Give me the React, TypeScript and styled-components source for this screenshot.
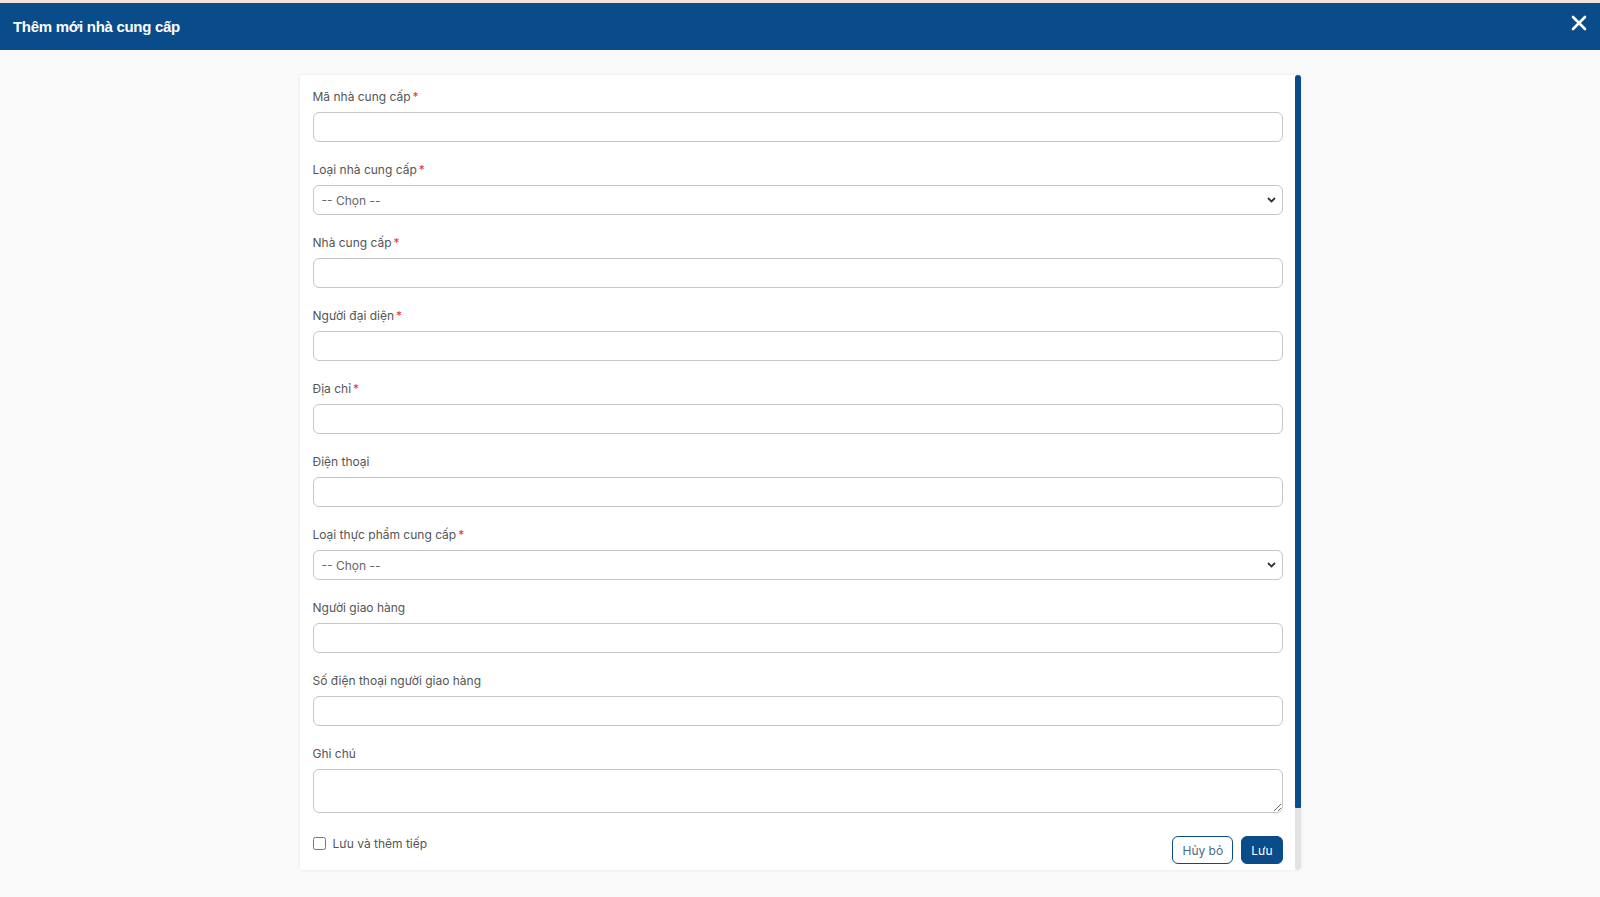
import React from "react";
import styled, { createGlobalStyle } from "styled-components";

const GlobalStyle = createGlobalStyle`
  html, body {
    margin: 0;
    padding: 0;
    background: #fafafa;
    font-family: "Inter", "Noto Sans", sans-serif;
  }
  * { box-sizing: border-box; }
`;

const Page = styled.div`
  height: 897px;
  display: flex;
  flex-direction: column;
  border-top: 3px solid #f3e3df;
  overflow: hidden;
`;

const Header = styled.div`
  height: 47px;
  flex-shrink: 0;
  background: #0a4c89;
  display: flex;
  align-items: center;
  justify-content: space-between;
  padding: 0 13px;
`;

const Title = styled.h1`
  margin: 0;
  color: #fff;
  font-family: "Liberation Sans", Arial, sans-serif;
  font-size: 15px;
  font-weight: 700;
  letter-spacing: -0.3px;
`;

const CloseButton = styled.button`
  border: 0;
  background: transparent;
  padding: 0;
  width: 16px;
  height: 16px;
  margin-top: -7px;
  cursor: pointer;
  display: flex;
`;

const Body = styled.div`
  flex: 1;
  display: flex;
  justify-content: center;
  padding-top: 25px;
`;

const Card = styled.div`
  width: 1001px;
  height: 795px;
  background: #fff;
  box-shadow: 0 0 4px rgba(0, 0, 0, 0.08);
  display: flex;
  overflow: hidden;
`;

const Content = styled.div`
  flex: 1;
  padding: 12px 12px 70px 13px;
`;

const ScrollTrack = styled.div`
  width: 6px;
  flex-shrink: 0;
  background: #e2e2e2;
  border-radius: 3px;
  display: flex;
  flex-direction: column;
`;

const ScrollThumb = styled.div`
  height: 733px;
  background: #0a4c89;
  border-radius: 3px 3px 1px 1px;
`;

const Field = styled.div`
  display: flex;
  flex-direction: column;
  margin-bottom: 18px;
`;

const Label = styled.label`
  font-size: 12px;
  line-height: 20px;
  color: #555;
  margin-bottom: 5px;
`;

const Star = styled.span`
  color: #e8323c;
  margin-left: 2px;
`;

const Input = styled.input`
  height: 30px;
  width: 100%;
  border: 1px solid #c6c6c6;
  border-radius: 6px;
  font-family: inherit;
  font-size: 12px;
  padding: 0 8px;
  outline: none;
`;

const SelectWrap = styled.div`
  position: relative;
  height: 30px;
`;

const Select = styled.select`
  appearance: none;
  height: 30px;
  width: 100%;
  border: 1px solid #c6c6c6;
  border-radius: 6px;
  background: #fff;
  color: #666;
  font-family: inherit;
  font-size: 12px;
  padding: 0 8px;
  outline: none;
`;

const Chevron = styled.svg`
  position: absolute;
  right: 7px;
  top: 12px;
  pointer-events: none;
`;

const TextArea = styled.textarea`
  display: block;
  height: 44px;
  width: 100%;
  border: 1px solid #c6c6c6;
  border-radius: 6px;
  font-family: inherit;
  font-size: 12px;
  padding: 6px 8px;
  outline: none;
`;

const Footer = styled.div`
  display: flex;
  justify-content: space-between;
  align-items: flex-start;
  margin-top: 5px;
`;

const CheckRow = styled.label`
  display: flex;
  align-items: center;
  gap: 7px;
  font-size: 12px;
  color: #555;
  margin-top: 5px;

  input {
    width: 13px;
    height: 13px;
    margin: 0;
  }
`;

const Buttons = styled.div`
  display: flex;
  gap: 8px;
  margin-top: 5px;
`;

const Button = styled.button<{ $primary?: boolean }>`
  height: 28px;
  padding: 0 9px;
  border-radius: 6px;
  font-family: inherit;
  font-size: 12px;
  cursor: pointer;
  border: 1px solid #0a4c89;
  background: ${(p) => (p.$primary ? "#0a4c89" : "#fff")};
  color: ${(p) => (p.$primary ? "#fff" : "#4a6a8a")};
`;

type FieldDef = { label: string; required?: boolean; kind?: "select" | "textarea" };

const fields: FieldDef[] = [
  { label: "Mã nhà cung cấp", required: true },
  { label: "Loại nhà cung cấp", required: true, kind: "select" },
  { label: "Nhà cung cấp", required: true },
  { label: "Người đại diện", required: true },
  { label: "Địa chỉ", required: true },
  { label: "Điện thoại" },
  { label: "Loại thực phẩm cung cấp", required: true, kind: "select" },
  { label: "Người giao hàng" },
  { label: "Số điện thoại người giao hàng" },
  { label: "Ghi chú", kind: "textarea" },
];

export default function App() {
  return (
    <>
      <GlobalStyle />
      <Page>
        <Header>
          <Title>Thêm mới nhà cung cấp</Title>
          <CloseButton aria-label="close">
            <svg width="16" height="16" viewBox="0 0 16 16">
              <path d="M2 2 L14 14 M14 2 L2 14" stroke="#fff" strokeWidth="2.6" strokeLinecap="round" />
            </svg>
          </CloseButton>
        </Header>
        <Body>
          <Card>
            <Content>
              {fields.map((f) => (
                <Field key={f.label}>
                  <Label>
                    {f.label}
                    {f.required && <Star>*</Star>}
                  </Label>
                  {f.kind === "select" ? (
                    <SelectWrap>
                      <Select defaultValue="">
                        <option value="">-- Chọn --</option>
                      </Select>
                      <Chevron width="9" height="6" viewBox="0 0 9 6">
                        <path d="M1 1 L4.5 4.5 L8 1" fill="none" stroke="#333" strokeWidth="1.8" />
                      </Chevron>
                    </SelectWrap>
                  ) : f.kind === "textarea" ? (
                    <TextArea />
                  ) : (
                    <Input />
                  )}
                </Field>
              ))}
              <Footer>
                <CheckRow>
                  <input type="checkbox" />
                  Lưu và thêm tiếp
                </CheckRow>
                <Buttons>
                  <Button>Hủy bỏ</Button>
                  <Button $primary>Lưu</Button>
                </Buttons>
              </Footer>
            </Content>
            <ScrollTrack>
              <ScrollThumb />
            </ScrollTrack>
          </Card>
        </Body>
      </Page>
    </>
  );
}
